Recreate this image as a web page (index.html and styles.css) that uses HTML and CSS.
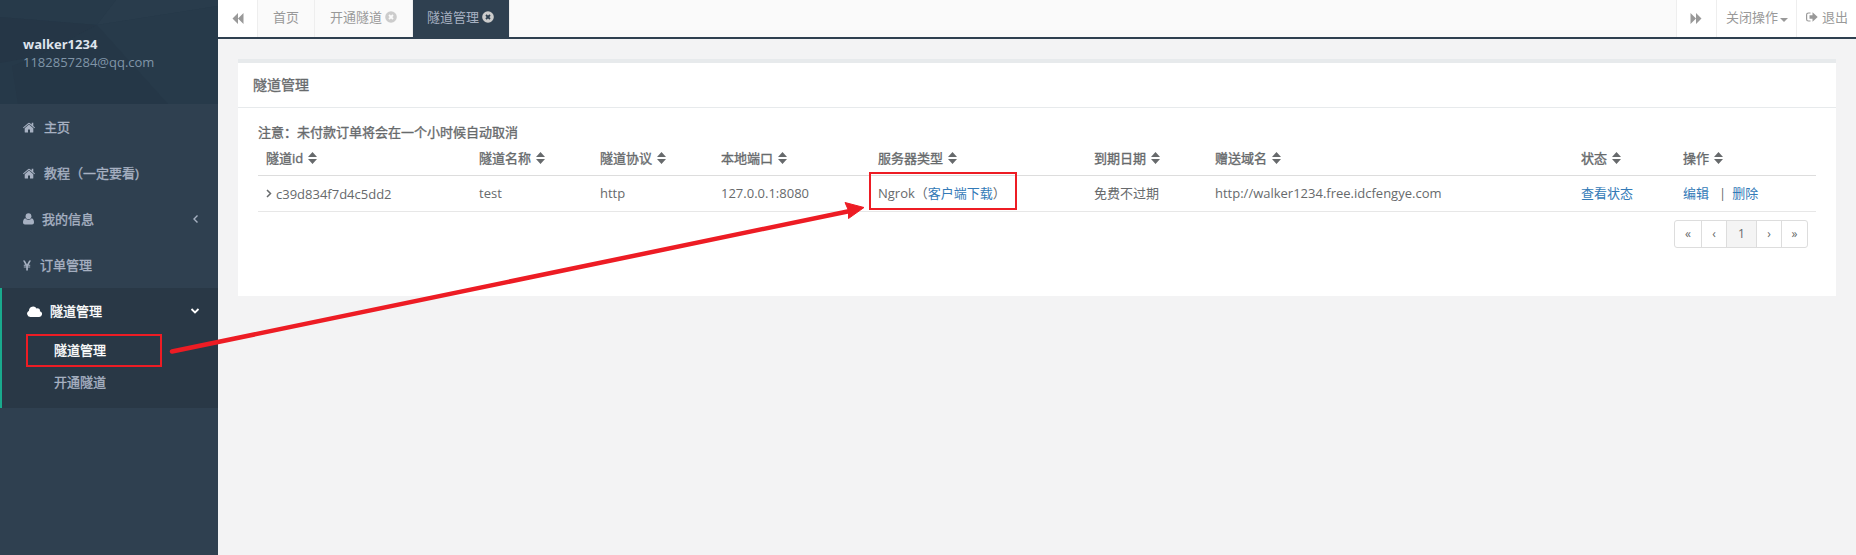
FILE: index.html
```html
<!DOCTYPE html>
<html lang="zh-CN">
<head>
<meta charset="utf-8">
<title>隧道管理</title>
<link rel="stylesheet" href="styles.css">
</head>
<body>
<svg class="defs" width="0" height="0" aria-hidden="true">
  <symbol id="home" viewBox="0 0 12 11"><path d="M6 2.600 1.700 6.200V10q0 .6.6.6H5V7.500H7V10.600H9.700q.6 0 .6-.6V6.200zM12 5.400 10.300 4V.8H8.700V2.600L6.700.9Q6 .4 5.300.9L0 5.400l.6.800L6 1.700 11.400 6.200z"/></symbol>
  <symbol id="user" viewBox="0 0 11 12"><circle cx="5.500" cy="3.200" r="2.900"/><path d="M2.300 5.200Q0 5.800 0 9.600 0 11.600 1.900 11.600H9.100Q11 11.600 11 9.600 11 5.800 8.700 5.200 7.300 6.800 5.500 6.800 3.700 6.800 2.300 5.200z"/></symbol>
  <symbol id="yen" viewBox="0 0 8 11"><path d="M0 .5H1.800L4 4.600 6.200.5H8L5.700 4.700H7.200V5.700H4.900V6.600H7.200V7.600H4.900V10.500H3.200V7.600H.8V6.600H3.200V5.700H.8V4.700H2.300z"/></symbol>
  <symbol id="cloud" viewBox="0 0 15 11"><path d="M3.300 11A3.300 3.300 0 0 1 2 4.700 4.100 4.100 0 0 1 9.600 2.500 2.400 2.400 0 0 1 12.900 5.300 2.900 2.900 0 0 1 12.100 11z"/></symbol>
  <symbol id="rewind" viewBox="0 0 12 12"><path d="M6 0V12L0 6zM12 0V12L6 6z"/></symbol>
  <symbol id="forward" viewBox="0 0 12 12"><path d="M0 0V12L6 6zM6 0V12L12 6z"/></symbol>
  <symbol id="sort" viewBox="0 0 9 12"><path d="M0 5 4.500 0 9 5zM0 7H9L4.500 12z"/></symbol>
  <symbol id="signout" viewBox="0 0 12 10"><path class="line" d="M4.500 1H2.500Q.6 1 .6 2.800V7.200Q.6 9 2.500 9H4.500"/><path d="M3.500 3.200H6.500V.3L11.700 5 6.500 9.700V6.800H3.500z"/></symbol>
</svg>
<div class="app">
  <aside class="sidebar">
    <header class="profile">
      <svg class="facets" viewBox="0 0 218 104" preserveAspectRatio="none" aria-hidden="true">
        <path fill="#273a4a" d="M0 0H116L97 25 0 17z"/><path fill="#293c4c" d="M116 0H218V6L97 25z"/><path fill="#253646" d="M0 17 97 25 38 56 0 63z"/><path fill="#253747" d="M97 25 168 104H18L12 66 38 56z"/><path fill="#273a4a" d="M97 25 218 6V104H168z"/>
      </svg>
      <div class="who"><strong>walker1234</strong><span>1182857284@qq.com</span></div>
    </header>
    <nav>
      <a class="item"><svg class="i-home"><use href="#home"/></svg><span>主页</span></a>
      <a class="item"><svg class="i-home"><use href="#home"/></svg><span>教程（一定要看)</span></a>
      <a class="item"><svg class="i-user"><use href="#user"/></svg><span>我的信息</span><svg class="caret" viewBox="0 0 8 8"><path d="M6.500 .5 3 4 6.500 7.500"/></svg></a>
      <a class="item"><svg class="i-yen"><use href="#yen"/></svg><span>订单管理</span></a>
      <div class="group">
        <a class="item"><svg class="i-cloud"><use href="#cloud"/></svg><span>隧道管理</span><svg class="caret" viewBox="0 0 8 8"><path d="M.5 2 4 5.500 7.500 2"/></svg></a>
        <a class="sub current">隧道管理</a>
        <a class="sub">开通隧道</a>
      </div>
    </nav>
  </aside>
  <main>
    <div class="tabs">
      <a class="btn back"><svg class="i-skip"><use href="#rewind"/></svg></a>
      <a class="tab first">首页</a>
      <a class="tab second">开通隧道<svg class="close" viewBox="0 0 12 12"><circle cx="6" cy="6" r="5.800"/><path d="M4 4 8 8M8 4 4 8"/></svg></a>
      <a class="tab active">隧道管理<svg class="close" viewBox="0 0 12 12"><circle cx="6" cy="6" r="5.800"/><path d="M4 4 8 8M8 4 4 8"/></svg></a>
      <div class="spacer"></div>
      <a class="btn next"><svg class="i-skip"><use href="#forward"/></svg></a>
      <a class="btn ops">关闭操作<i class="drop"></i></a>
      <a class="btn exit"><svg class="i-exit"><use href="#signout"/></svg>退出</a>
    </div>
    <section class="panel">
      <h5>隧道管理</h5>
      <div class="content">
        <p class="notice">注意：未付款订单将会在一个小时候自动取消</p>
        <table>
          <colgroup><col class="c1"><col class="c2"><col class="c2"><col class="c4"><col class="c5"><col class="c2"><col class="c7"><col class="c8"><col class="c9"></colgroup>
          <thead><tr>
            <th>隧道id<svg class="sort"><use href="#sort"/></svg></th>
            <th>隧道名称<svg class="sort"><use href="#sort"/></svg></th>
            <th>隧道协议<svg class="sort"><use href="#sort"/></svg></th>
            <th>本地端口<svg class="sort"><use href="#sort"/></svg></th>
            <th>服务器类型<svg class="sort"><use href="#sort"/></svg></th>
            <th>到期日期<svg class="sort"><use href="#sort"/></svg></th>
            <th>赠送域名<svg class="sort"><use href="#sort"/></svg></th>
            <th>状态<svg class="sort"><use href="#sort"/></svg></th>
            <th>操作<svg class="sort"><use href="#sort"/></svg></th>
          </tr></thead>
          <tbody><tr>
            <td class="id"><svg class="expand" viewBox="0 0 6 9"><path d="M1 1 4.500 4.500 1 8"/></svg>c39d834f7d4c5dd2</td>
            <td>test</td><td>http</td><td>127.0.0.1:8080</td>
            <td>Ngrok（<a>客户端下载</a>）</td>
            <td>免费不过期</td><td>http://walker1234.free.idcfengye.com</td>
            <td><a>查看状态</a></td>
            <td><a>编辑</a><span class="bar">|</span><a>删除</a></td>
          </tr></tbody>
        </table>
        <div class="pager"><a class="p1">«</a><a class="p2">‹</a><a class="p3">1</a><a class="p2">›</a><a class="p1">»</a></div>
      </div>
    </section>
  </main>
</div>
<div class="mark menu-mark"></div>
<div class="mark cell-mark"></div>
<svg class="arrow" viewBox="0 0 1856 555" aria-hidden="true"><path class="shaft" d="M172 351.500 850 211"/><path class="head" d="M864 207.500 845 202.500 848.500 210.500 848.500 218.500z"/></svg>
</body>
</html>
```
FILE: styles.css
```css
* { box-sizing: border-box; }
body { margin: 0; height: 555px; overflow: hidden; font: 13px/18px "Open Sans", "Noto Sans CJK SC", sans-serif; color: #676a6c; background: #f3f3f4; }
svg { display: block; flex: none; fill: currentColor; overflow: visible; }
.defs { position: absolute; }
.line { fill: none; stroke: currentColor; stroke-width: 1.2; }
.app { display: flex; height: 555px; }
.sidebar { width: 218px; flex: none; background: #2f4050; color: #a7b1c2; }
.profile { height: 104px; display: grid; background: #263949; }
.profile > * { grid-area: 1 / 1; }
.facets { width: 218px; height: 104px; }
.who { z-index: 1; padding: 35px 0 0 23px; color: #8095a8; }
.who strong, .who span { display: block; }
.who strong { color: #dfe4ed; }
.item span, .sub, h5, .notice, th { -webkit-text-stroke: .35px currentColor; }
.item { display: flex; align-items: center; height: 46px; padding: 0 19px 0 23px; }
.i-home { width: 12px; height: 11px; margin-right: 9px; }
.i-user { width: 11px; height: 12px; margin-right: 8px; }
.i-yen { width: 8px; height: 11px; margin-right: 9px; }
.i-cloud { width: 15px; height: 11px; margin-right: 8px; }
.caret { width: 8px; height: 8px; margin-left: auto; fill: none; stroke: currentColor; stroke-width: 1.4; }
.group { height: 120px; background: #293846; border-left: 2px solid #19aa8d; }
.group .item { color: #fff; padding-left: 25px; }
.group .caret { stroke-width: 1.8; }
.sub { display: block; height: 32px; padding: 7px 0 0 52px; }
.current { color: #fff; }
main { flex: 1; min-width: 0; background: #f3f3f4; }
.tabs { display: flex; height: 39px; background: #fafafa; border-bottom: 2px solid #2f4050; color: #999; }
.tabs a { display: flex; align-items: center; height: 37px; border-right: 1px solid #eee; padding-bottom: 3px; }
.tabs .btn { background: #fff; }
.i-skip { width: 12px; height: 11px; margin-top: 3px; }
.back { width: 40px; padding-left: 14px; }
.first { width: 57px; padding-left: 15px; }
.second { width: 98px; padding-left: 15px; }
.tabs .active { width: 97px; padding-left: 14px; background: #2f4050; color: #a7b1c2; }
.close { width: 12px; height: 12px; margin-left: 3px; color: #ccc; }
.close path { fill: none; stroke: #fafafa; stroke-width: 1.8; }
.active .close path { stroke: #2f4050; }
.spacer { flex: 1; border-right: 1px solid #eee; }
.next { width: 40px; padding-left: 13px; }
.ops { width: 80px; padding-left: 9px; }
.drop { border: 4px solid transparent; border-top-color: #999; border-bottom: 0; margin: 5px 0 0 2px; }
.tabs .exit { width: 59px; padding-left: 9px; border-right: 0; }
.i-exit { width: 12px; height: 10px; margin-right: 4px; }
.panel { margin: 20px 20px 0; height: 237px; background: #fff; border-top: 4px solid #e7eaec; }
h5 { margin: 0; height: 45px; padding: 13px 15px 0; font-size: 14px; font-weight: 400; line-height: 18px; border-bottom: 1px solid #e7eaec; }
.content { padding: 15px 20px 0; }
.notice { margin: 0; height: 18px; }
table { table-layout: fixed; width: 1558px; border-collapse: separate; border-spacing: 0; }
.c1 { width: 213px; } .c2 { width: 121px; } .c4 { width: 157px; } .c5 { width: 216px; } .c7 { width: 366px; } .c8 { width: 102px; } .c9 { width: 141px; }
th, td { padding: 0 8px; text-align: left; white-space: nowrap; }
th { height: 35px; font-weight: 400; border-bottom: 1px solid #ddd; }
td { height: 36px; padding-bottom: 1px; border-bottom: 1px solid #e7e7e7; }
.id { padding: 1px 8px 0; }
.sort { display: inline-block; width: 9px; height: 12px; margin-left: 5px; vertical-align: -1px; }
.expand { display: inline-block; width: 6px; height: 9px; margin-right: 4px; vertical-align: 1px; fill: none; stroke: currentColor; stroke-width: 1.5; }
td a { color: #337ab7; }
.bar { margin: 0 6px 0 10px; }
.pager { display: flex; width: 134px; height: 28px; margin: 8px 8px 0 auto; border: 1px solid #ddd; border-radius: 3px; font-size: 12px; line-height: 26px; text-align: center; }
.pager a + a { border-left: 1px solid #ddd; }
.p1 { width: 26px; } .p2 { width: 25px; } .p3 { width: 30px; background: #f4f4f4; }
.mark { position: absolute; border: 2px solid #ed1c24; }
.menu-mark { left: 26px; top: 334px; width: 136px; height: 33px; }
.cell-mark { left: 869px; top: 172px; width: 148px; height: 38px; }
.arrow { position: absolute; left: 0; top: 0; width: 1856px; height: 555px; pointer-events: none; }
.shaft { fill: none; stroke: #ed1c24; stroke-width: 4.5; stroke-linecap: round; }
.head { fill: #ed1c24; stroke: #ed1c24; stroke-width: 1; }
```
